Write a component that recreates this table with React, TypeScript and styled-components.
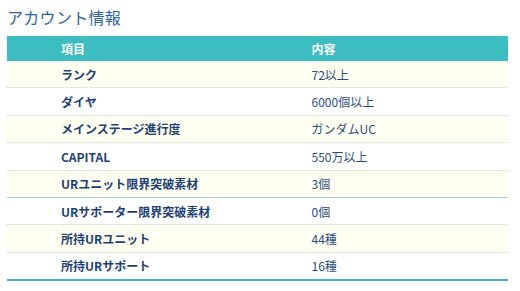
import React from 'react';
import styled, {createGlobalStyle} from 'styled-components';

type Item = {
    label: string,
    value: string,
}

const items: Item[] = [
    {label: 'ランク', value: '72以上'},
    {label: 'ダイヤ', value: '6000個以上'},
    {label: 'メインステージ進行度', value: 'ガンダムUC'},
    {label: 'CAPITAL', value: '550万以上'},
    {label: 'URユニット限界突破素材', value: '3個'},
    {label: 'URサポーター限界突破素材', value: '0個'},
    {label: '所持URユニット', value: '44種'},
    {label: '所持URサポート', value: '16種'},
];

export default function App() {
    return (
        <>
            <GlobalStyle />
            <Frame>
                <Title>アカウント情報</Title>
                <Table>
                    <HeadRow>
                        <HeadCell>項目</HeadCell>
                        <HeadCell>内容</HeadCell>
                    </HeadRow>
                    {items.map((item, index) => (
                        <Row
                            key={item.label}
                            $odd={index % 2 === 0}
                            $solid={index === 4}
                            $last={index === items.length - 1}
                        >
                            <Label>{item.label}</Label>
                            <Value>{item.value}</Value>
                        </Row>
                    ))}
                </Table>
            </Frame>
        </>
    )
}

const GlobalStyle = createGlobalStyle`
    body {
        margin: 0;
        background: #ffffff;
        font-family: "Noto Sans CJK JP", "Noto Sans", sans-serif;
    }
`;
const Frame = styled.section`
    width: 501px;
    padding: 6px 0 0 7px;
`;
const Title = styled.h2`
    margin: 0 0 8px;
    font-size: 16px;
    line-height: 22px;
    font-weight: 400;
    color: #2a63a8;
    letter-spacing: 0.3px;
`;
const Table = styled.div`
    display: flex;
    flex-direction: column;
`;
const HeadRow = styled.div`
    display: grid;
    grid-template-columns: 1fr 1fr;
    height: 25px;
    background-color: #3bbdc1;
`;
const HeadCell = styled.div`
    display: flex;
    align-items: center;
    padding-left: 54px;
    font-size: 12px;
    font-weight: 700;
    color: #ffffff;
`;
const Row = styled.div<{$odd: boolean, $solid: boolean, $last: boolean}>`
    display: grid;
    grid-template-columns: 1fr 1fr;
    height: 26.4px;
    background-color: ${p => p.$odd ? '#fffff2' : '#ffffff'};
    border-bottom: ${p => p.$last ? '2px solid #45b3bd' : p.$solid ? '1px solid #a9cfd6' : '1px dotted #cfcfcf'};
`;
const Label = styled.div`
    display: flex;
    align-items: center;
    padding-left: 54px;
    font-size: 12px;
    font-weight: 700;
    color: #1d3f74;
`;
const Value = styled.div`
    display: flex;
    align-items: center;
    padding-left: 54px;
    font-size: 12px;
    color: #2b4d7c;
`;
